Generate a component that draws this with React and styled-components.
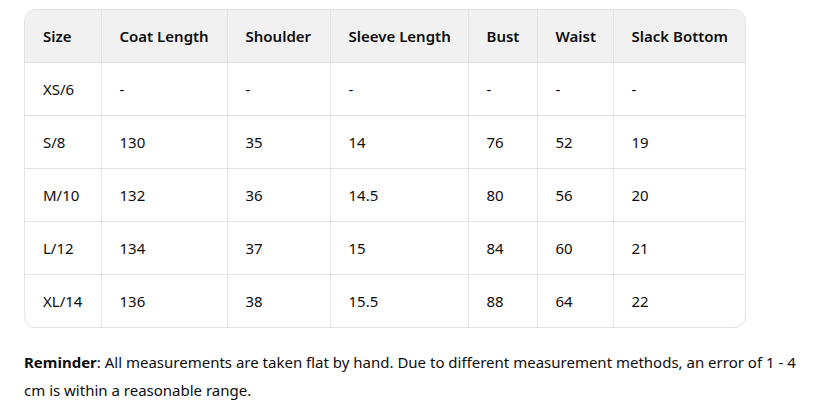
import React from "react";
import styled, { createGlobalStyle } from "styled-components";

const Global = createGlobalStyle`
  html, body { margin: 0; padding: 0; background: #ffffff; }
  body { font-family: "Noto Sans", "Open Sans", sans-serif; color: #0d0d0d; }
`;

const Page = styled.div`
  padding: 9px 0 0 24px;
  width: 816px;
  box-sizing: border-box;
`;

const TableWrap = styled.div`
  width: 722px;
  border: 1px solid #e3e3e3;
  border-radius: 12px;
  overflow: hidden;
  box-sizing: border-box;
`;

const Table = styled.table`
  width: 720px;
  border-collapse: collapse;
  table-layout: fixed;
  font-size: 15px;
`;

const Head = styled.th`
  background: #f1f1f1;
  font-weight: 600;
  text-align: left;
  height: 52px;
  padding: 0 0 0 18px;
  border-left: 1px solid #e3e3e3;
  border-bottom: 1px solid #e3e3e3;
  white-space: nowrap;
  &:first-child { border-left: none; }
`;

const Cell = styled.td`
  height: 52px;
  padding: 0 0 0 18px;
  border-left: 1px solid #e3e3e3;
  border-top: 1px solid #e3e3e3;
  font-weight: 400;
  &:first-child { border-left: none; }
`;

const Row = styled.tr`
  &:first-child td { border-top: none; }
`;

const Note = styled.p`
  margin: 20px 0 0 0;
  font-size: 15px;
  line-height: 28px;
  width: 780px;
`;

const cols = [76, 126, 103, 138, 69, 76, 132];
const headers = ["Size", "Coat Length", "Shoulder", "Sleeve Length", "Bust", "Waist", "Slack Bottom"];
const rows = [
  ["XS/6", "-", "-", "-", "-", "-", "-"],
  ["S/8", "130", "35", "14", "76", "52", "19"],
  ["M/10", "132", "36", "14.5", "80", "56", "20"],
  ["L/12", "134", "37", "15", "84", "60", "21"],
  ["XL/14", "136", "38", "15.5", "88", "64", "22"],
];

export default function App() {
  return (
    <Page>
      <Global />
      <TableWrap>
        <Table>
          <colgroup>
            {cols.map((w, i) => (
              <col key={i} style={{ width: w }} />
            ))}
          </colgroup>
          <thead>
            <tr>
              {headers.map((h) => (
                <Head key={h}>{h}</Head>
              ))}
            </tr>
          </thead>
          <tbody>
            {rows.map((r) => (
              <Row key={r[0]}>
                {r.map((c, i) => (
                  <Cell key={i}>{c}</Cell>
                ))}
              </Row>
            ))}
          </tbody>
        </Table>
      </TableWrap>
      <Note>
        <strong>Reminder</strong>: All measurements are taken flat by hand. Due to different measurement methods, an error of 1 - 4 cm is within a reasonable range.
      </Note>
    </Page>
  );
}
